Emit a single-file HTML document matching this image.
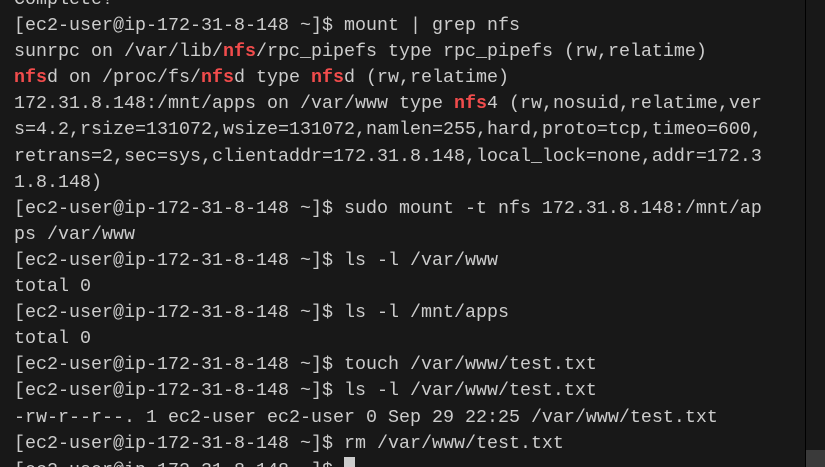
<!DOCTYPE html>
<html><head><meta charset="utf-8"><style>
html,body{margin:0;padding:0;width:825px;height:467px;overflow:hidden;background:#181818;position:relative;}
pre{position:absolute;left:14px;top:-13px;margin:0;font-family:"Liberation Mono",monospace;font-size:18.33px;line-height:26.1px;color:#cccccc;white-space:pre;}
.r{color:#f14c4c;font-weight:bold;}
.cur{display:inline-block;width:11px;height:22px;background:#cccccc;vertical-align:-4px;}
.sep{position:absolute;left:805px;top:0;width:1px;height:467px;background:#000;}
.thumb{position:absolute;left:806px;top:450px;width:19px;height:17px;background:#3a3a3a;}
</style></head><body>
<pre>Complete!
[ec2-user@ip-172-31-8-148 ~]$ mount | grep nfs
sunrpc on /var/lib/<span class="r">nfs</span>/rpc_pipefs type rpc_pipefs (rw,relatime)
<span class="r">nfs</span>d on /proc/fs/<span class="r">nfs</span>d type <span class="r">nfs</span>d (rw,relatime)
172.31.8.148:/mnt/apps on /var/www type <span class="r">nfs</span>4 (rw,nosuid,relatime,ver
s=4.2,rsize=131072,wsize=131072,namlen=255,hard,proto=tcp,timeo=600,
retrans=2,sec=sys,clientaddr=172.31.8.148,local_lock=none,addr=172.3
1.8.148)
[ec2-user@ip-172-31-8-148 ~]$ sudo mount -t nfs 172.31.8.148:/mnt/ap
ps /var/www
[ec2-user@ip-172-31-8-148 ~]$ ls -l /var/www
total 0
[ec2-user@ip-172-31-8-148 ~]$ ls -l /mnt/apps
total 0
[ec2-user@ip-172-31-8-148 ~]$ touch /var/www/test.txt
[ec2-user@ip-172-31-8-148 ~]$ ls -l /var/www/test.txt
-rw-r--r--. 1 ec2-user ec2-user 0 Sep 29 22:25 /var/www/test.txt
[ec2-user@ip-172-31-8-148 ~]$ rm /var/www/test.txt
[ec2-user@ip-172-31-8-148 ~]$ <span class="cur"></span></pre>
<div class="sep"></div><div class="thumb"></div>
</body></html>
